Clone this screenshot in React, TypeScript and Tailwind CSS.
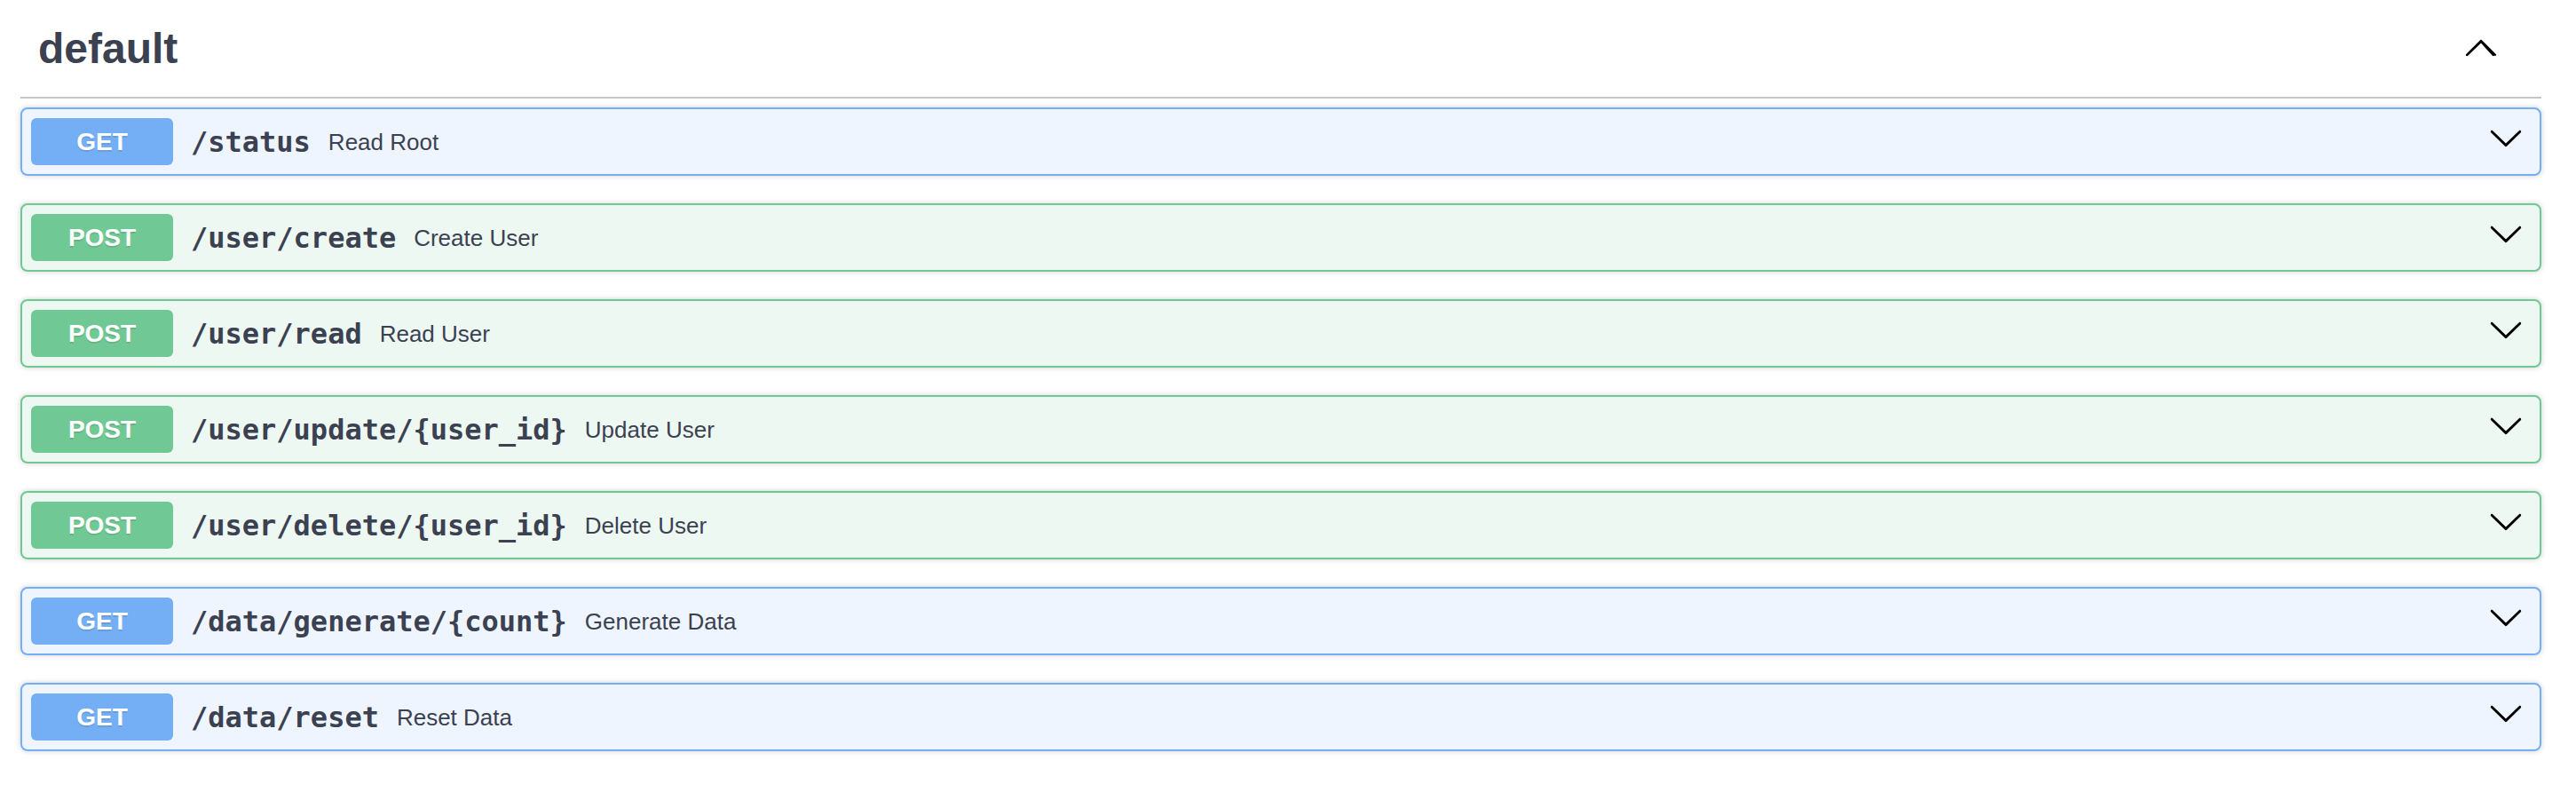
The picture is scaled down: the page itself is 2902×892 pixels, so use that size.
import React from "react";

type Op = { method: "GET" | "POST"; path: string; summary: string };

const ops: Op[] = [
  { method: "GET", path: "/status", summary: "Read Root" },
  { method: "POST", path: "/user/create", summary: "Create User" },
  { method: "POST", path: "/user/read", summary: "Read User" },
  { method: "POST", path: "/user/update/{user_id}", summary: "Update User" },
  { method: "POST", path: "/user/delete/{user_id}", summary: "Delete User" },
  { method: "GET", path: "/data/generate/{count}", summary: "Generate Data" },
  { method: "GET", path: "/data/reset", summary: "Reset Data" },
];

const sans = { fontFamily: '"Liberation Sans", Arial, Helvetica, sans-serif' };
const mono = { fontFamily: '"DejaVu Sans Mono", Menlo, monospace' };

function ArrowDown() {
  return (
    <svg width="40" height="40" viewBox="0 0 20 20" className="mr-[8px] mb-[9px] shrink-0" aria-hidden="true">
      <path
        fill="#000"
        d="M17.418 6.109c.272-.268.709-.268.979 0s.271.701 0 .969l-7.908 7.83c-.27.268-.707.268-.979 0l-7.908-7.83c-.27-.268-.27-.701 0-.969.271-.268.709-.268.979 0L10 13.25l7.418-7.141z"
      />
    </svg>
  );
}

function ArrowUp() {
  return (
    <svg width="40" height="40" viewBox="0 0 20 20" className="mr-[8px] mb-[3px] shrink-0" aria-hidden="true">
      <path
        fill="#000"
        d="M17.418 14.908c-.272.268-.709.268-.979 0L10 7.767 2.582 14.908c-.27.268-.707.268-.979 0-.27-.268-.27-.701 0-.969l7.908-7.83c.27-.268.707-.268.979 0l7.908 7.83c.27.268.27.701 0 .969z"
      />
    </svg>
  );
}

function Row({ op }: { op: Op }) {
  const get = op.method === "GET";
  return (
    <div
      className={
        "flex items-center rounded-[8px] border-2 px-[10px] py-[10px] shadow-[0_0_6px_rgba(0,0,0,0.19)] " +
        (get ? "border-[#74aff6] bg-[#eff5fe]" : "border-[#70c894] bg-[#eef8f3]")
      }
    >
      <div
        className={
          "flex h-[53px] w-[160px] shrink-0 items-center justify-center rounded-[6px] text-[28px] font-bold text-white [text-shadow:0_2px_0_rgba(0,0,0,0.1)] " +
          (get ? "bg-[#74aff6]" : "bg-[#70c894]")
        }
        style={sans}
      >
        {op.method}
      </div>
      <span className="px-[20px] text-[32px] font-bold leading-none text-[#3b4151]" style={mono}>
        {op.path}
      </span>
      <span className="flex-1 text-[26px] leading-none text-[#3b4151]" style={sans}>
        {op.summary}
      </span>
      <ArrowDown />
    </div>
  );
}

export default function App() {
  return (
    <div className="min-h-[892px] w-[2902px] bg-white pl-[23px] pr-[39px]">
      <div className="mb-[10px] flex h-[111px] items-center border-b-2 border-[#c5c6cb] pl-[20px] pr-[40px]">
        <h3 className="flex-1 text-[48px] font-bold leading-none text-[#3b4151]" style={sans}>
          default
        </h3>
        <ArrowUp />
      </div>
      <div className="flex flex-col gap-[31px]">
        {ops.map((op) => (
          <Row key={op.path} op={op} />
        ))}
      </div>
    </div>
  );
}
